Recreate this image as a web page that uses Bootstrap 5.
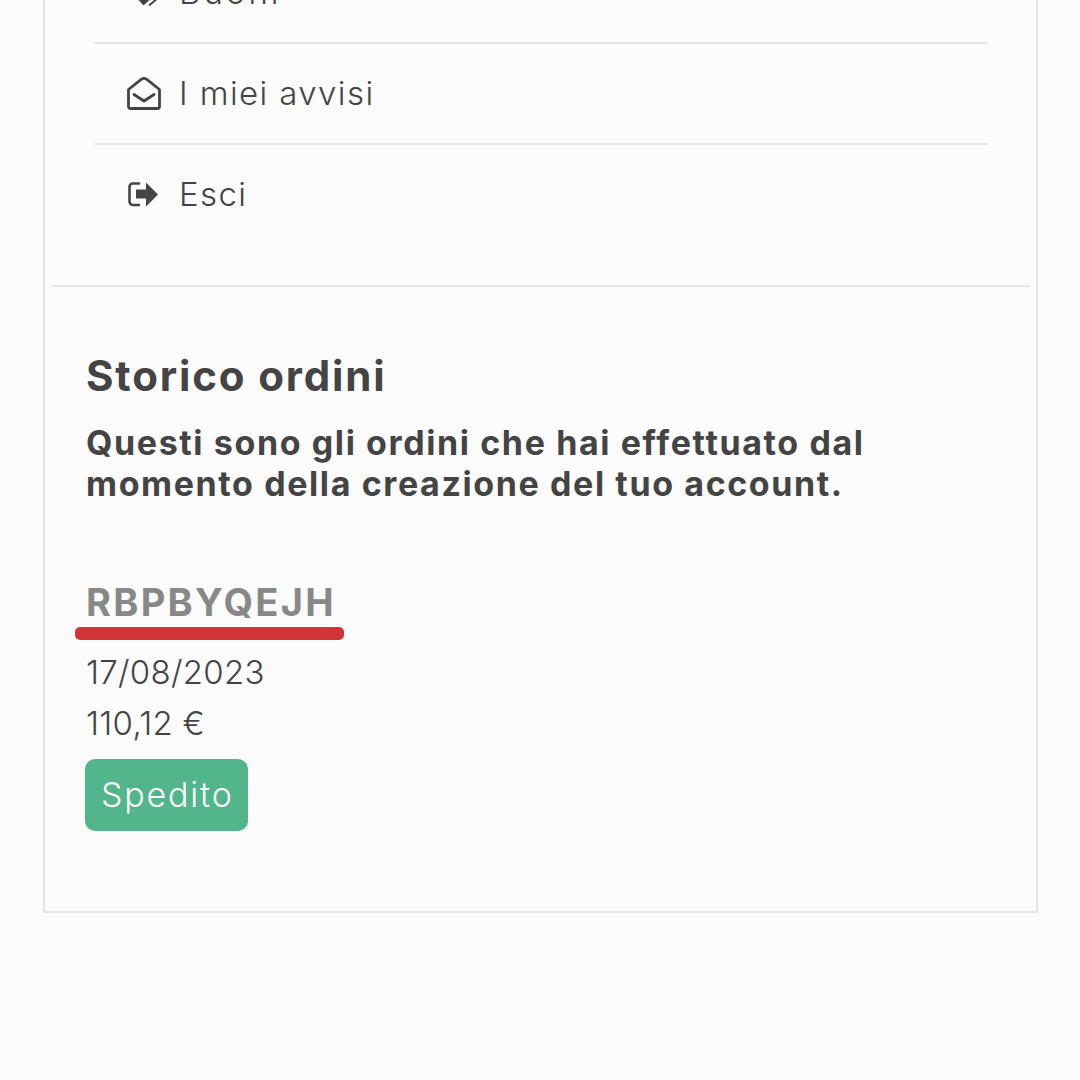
<!DOCTYPE html>
<html lang="it">

<head>
    <meta charset="UTF-8">
    <meta name="viewport" content="width=device-width, initial-scale=1.0">
    <title>Storico ordini</title>
    <link href="https://cdn.jsdelivr.net/npm/bootstrap@5.3.3/dist/css/bootstrap.min.css" rel="stylesheet">
    <script src="https://cdn.jsdelivr.net/npm/bootstrap@5.3.3/dist/js/bootstrap.bundle.min.js"></script>

    <style>
        html, body {
            height: 1080px;
            overflow: hidden;
        }

        body {
            background-color: #fbfbfb;
            color: #444;
            font-family: Inter, "Liberation Sans", sans-serif;
        }

        .account-box {
            margin: -57px 42px 0 43px;
            height: 970px;
            border: 2px solid #e5e5e5;
            border-top: 0;
            padding: 0 6px;
        }

        .menu-list {
            padding: 0 43px;
            border-bottom: 2px solid #e5e5e5;
            height: 344px;
        }

        .menu-row {
            height: 101px;
            padding-left: 32px;
            gap: 17px;
            font-size: 33px;
            font-weight: 300;
            letter-spacing: 1.4px;
            border-bottom: 2px solid #e5e5e5;
        }

        .menu-row:last-child {
            border-bottom-color: transparent;
        }

        .menu-row .wide-label {
            letter-spacing: 3px;
        }

        .menu-icon {
            width: 36px;
            height: 36px;
            flex: none;
        }

        .orders-block {
            padding: 62px 0 0 35px;
        }

        .orders-title {
            font-size: 42px;
            font-weight: 700;
            line-height: 54px;
            letter-spacing: 1.85px;
            margin-bottom: 19px;
            color: #444;
        }

        .orders-intro {
            font-size: 34px;
            font-weight: 700;
            line-height: 41px;
            letter-spacing: 1.6px;
            margin-bottom: 74px;
            max-width: 800px;
        }

        .order-code {
            display: inline-block;
            font-size: 38px;
            font-weight: 700;
            line-height: 49px;
            letter-spacing: 2.3px;
            color: #888;
            padding: 0 8px 0 11px;
            margin-left: -11px;
        }

        .code-bar {
            display: block;
            height: 13px;
            margin: 0 -8px 0 -11px;
            background-color: #d13438;
            border-radius: 5px;
        }

        .order-line {
            font-size: 33px;
            font-weight: 300;
            line-height: 51px;
            letter-spacing: .3px;
        }

        .code-gap {
            margin-top: 7px;
        }

        .state-chip {
            display: inline-block;
            background-color: #52b58b;
            color: #fff;
            font-size: 34px;
            font-weight: 300;
            line-height: 72px;
            letter-spacing: 1.8px;
            padding: 0 14px 0 16px;
            border-radius: 10px;
            margin: 10px 0 0 -1px;
        }
    </style>
</head>

<body>

    <div class="account-box">
        <div class="menu-list">
            <div class="menu-row d-flex align-items-center">
                <svg class="menu-icon" viewBox="0 0 36 36" fill="#444">
                    <path d="M10 22h17l-9 8h-1z"/>
                    <path d="M31 25l-7 6-2-1 6-5z"/>
                </svg>
                <span class="wide-label">Buoni</span>
            </div>
            <div class="menu-row d-flex align-items-center">
                <svg class="menu-icon" viewBox="0 0 36 36" fill="none" stroke="#444" stroke-width="2.800" stroke-linejoin="round" stroke-linecap="round">
                    <path d="M2.500 13.500 15.500 3.200Q18 1.500 20.500 3.200L33.500 13.500V30.500a2 2 0 0 1-2 2h-27a2 2 0 0 1-2-2z"/>
                    <path d="M8 18.500l10 6.500 10-6.500"/>
                </svg>
                <span>I miei avvisi</span>
            </div>
            <div class="menu-row d-flex align-items-center">
                <svg class="menu-icon" viewBox="0 0 36 36">
                    <path d="M13 6.500H7a3.500 3.500 0 0 0-3.500 3.500v14.500A3.500 3.500 0 0 0 7 28h6" fill="none" stroke="#444" stroke-width="2.600" stroke-linecap="round"/>
                    <path d="M10 12.500h10V5.500l12 12-12 12v-8H10z" fill="#444"/>
                </svg>
                <span>Esci</span>
            </div>
        </div>

        <div class="orders-block">
            <h2 class="orders-title">Storico ordini</h2>
            <p class="orders-intro">Questi sono gli ordini che hai effettuato dal momento della creazione del tuo account.</p>
            <div><span class="order-code">RBPBYQEJH<span class="code-bar"></span></span></div>
            <div class="order-line code-gap">17/08/2023</div>
            <div class="order-line">110,12 €</div>
            <span class="state-chip">Spedito</span>
        </div>
    </div>

</body>

</html>
